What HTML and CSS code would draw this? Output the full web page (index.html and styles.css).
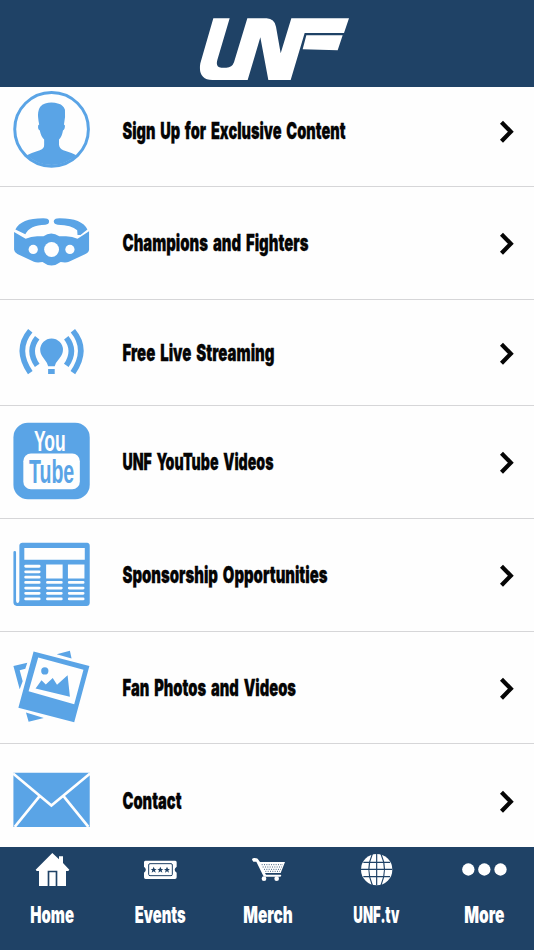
FILE: index.html
```html
<!DOCTYPE html>
<html lang="en">
<head>
<meta charset="utf-8">
<title>UNF</title>
<link rel="stylesheet" href="styles.css">
</head>
<body>
<div class="app">
<header class="header">
  <svg class="logo" viewBox="0 0 570 261" role="img" aria-label="UNF">
    <path d="M100 55H149L112 180Q106 202 124 203H139Q156 203 162 187L202 55H260Q283 56 288 80L302 160L334 55H507L492 99H374L332 240H265L241 112L203 240H97Q53 238 61 190ZM379 106H488L473 151L368 148Z"/>
  </svg>
</header>
<main class="list">
  <a class="row row-first">
    <svg class="icon" viewBox="0 -30 360 336"><circle class="line" cx="154.500" cy="134.500" r="111.500" stroke-width="9"/><path d="M80 213Q90 207 119 198Q133 192 132 181V165Q122 156 119 138Q112 135 114 122L117 120Q112 96 114 83Q116 62 135 56Q155 50 176 57Q190 61 195 75Q197 94 192 120L195 123Q195 135 189 138Q186 157 177 165V181Q178 192 190 198Q220 207 229 213A108 108 0 0 1 80 213Z"/></svg>
    <svg class="label" viewBox="0 0 350 40"><text x="2.500" y="28" textLength="223" lengthAdjust="spacingAndGlyphs">Sign Up for Exclusive Content</text></svg>
    <svg class="arrow" viewBox="0 0 20 30"><path d="M3.500 5.200L12.800 14.700L3.500 24.200"/></svg>
  </a>
  <a class="row">
    <svg class="icon" viewBox="0 -39 360 339"><path d="M45 90Q62 54 137 56Q147 57 147 65Q147 75 136 75Q88 76 75 104ZM263 90Q246 54 171 56Q162 57 161 65Q162 75 173 75Q215 76 232 92L233 106H242ZM41 97L76 118Q94 109 115 110L130 110Q153 94 178 110L194 110Q216 109 233 118L268 95V151Q267 160 254 165L207 187Q199 191 182 188Q154 209 127 188Q110 191 101 187L51 164Q42 159 41 151Z"/><g class="paper"><circle cx="99" cy="150" r="14"/><circle cx="154.500" cy="150" r="22.500"/><circle cx="210" cy="150" r="14"/></g></svg>
    <svg class="label" viewBox="0 0 350 40"><text x="2.500" y="28" textLength="186" lengthAdjust="spacingAndGlyphs">Champions and Fighters</text></svg>
    <svg class="arrow" viewBox="0 0 20 30"><path d="M3.500 5.200L12.800 14.700L3.500 24.200"/></svg>
  </a>
  <a class="row row-short">
    <svg class="icon" viewBox="0 -45 360 318"><path d="M144 156Q142 145 131 132Q120 120 120 106A34.500 34.500 0 0 1 189 106Q189 120 178 132Q166 145 164 156ZM144 164H164V179H144Z"/><path class="line" stroke-width="17" d="M90 48Q42 105 90 175M111 69Q80 108 111 153M219 48Q267 105 219 175M199 69Q230 108 199 153"/></svg>
    <svg class="label" viewBox="0 0 350 40"><text x="2.500" y="28" textLength="152" lengthAdjust="spacingAndGlyphs">Free Live Streaming</text></svg>
    <svg class="arrow" viewBox="0 0 20 30"><path d="M3.500 5.200L12.800 14.700L3.500 24.200"/></svg>
  </a>
  <a class="row">
    <svg class="icon" viewBox="0 -27 360 339"><rect x="39" y="24" width="231" height="231" rx="44"/><rect class="paper" x="69" y="117" width="171" height="108" rx="23"/><text class="tube paper" x="101" y="109" font-size="88" textLength="96" lengthAdjust="spacingAndGlyphs">You</text><text class="tube" x="86" y="206" font-size="98" textLength="137" lengthAdjust="spacingAndGlyphs">Tube</text></svg>
    <svg class="label" viewBox="0 0 350 40"><text x="2.500" y="28" textLength="151" lengthAdjust="spacingAndGlyphs">UNF YouTube Videos</text></svg>
    <svg class="arrow" viewBox="0 0 20 30"><path d="M3.500 5.200L12.800 14.700L3.500 24.200"/></svg>
  </a>
  <a class="row">
    <svg class="icon" viewBox="0 -33 360 339"><path d="M39 68Q39 64 43 64Q47 64 47 68V212Q47 221 52 221Q57 221 57 214V47Q58 39 66 39H262Q270 40 270 48V221Q269 230 261 230H49Q40 230 39 220Z"/><path class="paper" d="M72 55H255V90H72ZM138 105H188V147H138ZM204 105H254V147H204Z"/><path class="rules" d="M76 110H117M76 127H117M76 143H117M76 159H117M76 176H117M76 192H117M76 209H117M142 159H184M142 176H184M142 192H184M142 209H184M208 159H250M208 176H250M208 192H250M208 209H250"/></svg>
    <svg class="label" viewBox="0 0 350 40"><text x="2.500" y="28" textLength="205" lengthAdjust="spacingAndGlyphs">Sponsorship Opportunities</text></svg>
    <svg class="arrow" viewBox="0 0 20 30"><path d="M3.500 5.200L12.800 14.700L3.500 24.200"/></svg>
  </a>
  <a class="row row-mid">
    <svg class="icon" viewBox="0 -24 360 336"><path d="M170 43L210 33L215 56ZM39 79L81 69L75 87L58 92L67 125L58 149ZM77 220L131 236L85 248Z"/><path fill-rule="evenodd" d="M100 35L269 79L223 249L54 205ZM114 53L85 155L223 195L251 90Z"/><circle cx="134" cy="94" r="11"/><path d="M106 147L124 122L137 135L158 115L171 136L203 107L210 172Z"/></svg>
    <svg class="label" viewBox="0 0 350 40"><text x="2.500" y="28" textLength="173.500" lengthAdjust="spacingAndGlyphs">Fan Photos and Videos</text></svg>
    <svg class="arrow" viewBox="0 0 20 30"><path d="M3.500 5.200L12.800 14.700L3.500 24.200"/></svg>
  </a>
  <a class="row row-last">
    <svg class="icon" viewBox="0 -48 360 342"><path d="M39 39H270V203H39Z"/><path class="fold" d="M38 41L154 138L271 41M119 109L43 203M190 109L266 203"/></svg>
    <svg class="label" viewBox="0 0 350 40"><text x="2.500" y="28" textLength="59" lengthAdjust="spacingAndGlyphs">Contact</text></svg>
    <svg class="arrow" viewBox="0 0 20 30"><path d="M3.500 5.200L12.800 14.700L3.500 24.200"/></svg>
  </a>
</main>
<nav class="tabs">
  <a class="tab"><svg viewBox="-6 261 324 309"><path d="M157 279L177 298V289H189V309L208 329L205 333H198V378H172V332H143V378H117V333H110L107 329ZM148 337H167V378H148Z"/><text x="91" y="488" textLength="131" lengthAdjust="spacingAndGlyphs">Home</text></svg></a>
  <a class="tab"><svg viewBox="318 261 324 309"><path d="M436 302H526Q530 302 530 307V320Q518 329 530 338V352Q530 357 525 357H437Q432 357 432 352V338Q443 329 432 320V307Q432 302 436 302Z"/><rect class="ticket-line" x="446" y="311" width="71" height="36" rx="4"/><g class="stars"><path id="star" d="M461 320L464 327H470L465 331L467 338L461 334L455 338L457 331L452 327H458Z"/><use href="#star" x="20"/><use href="#star" x="40"/></g><text x="404" y="488" textLength="153" lengthAdjust="spacingAndGlyphs">Events</text></svg></a>
  <a class="tab"><svg viewBox="642 261 324 309"><path d="M762 294Q754 295 757 301L760 305H769L789 346Q790 350 795 350H838Q844 350 844 347L842 344H798L795 339H842L855 306H780L773 296Q771 294 762 294Z"/><circle cx="792" cy="356" r="7"/><circle cx="830" cy="356" r="7"/><path class="basket" d="M785 314H849M788 321H846M792 328H843M796 334H840"/><text x="730" y="488" textLength="148" lengthAdjust="spacingAndGlyphs">Merch</text></svg></a>
  <a class="tab"><svg viewBox="165 261 324 309"><circle cx="329" cy="329" r="47"/><path class="globe-line" d="M329 282V376M282 328H376M289 307H369M289 350H369M316 282Q295 328 316 376M342 282Q363 328 342 376"/><text x="259" y="488" textLength="138" lengthAdjust="spacingAndGlyphs">UNF.tv</text></svg></a>
  <a class="tab"><svg viewBox="489 261 324 309"><circle cx="604" cy="328.500" r="18.500"/><circle cx="652" cy="328.500" r="18.500"/><circle cx="700.500" cy="328.500" r="18.500"/><text x="592" y="488" textLength="120" lengthAdjust="spacingAndGlyphs">More</text></svg></a>
</nav>
</div>
</body>
</html>
```
FILE: styles.css
```css
* { box-sizing: border-box; }
body { margin: 0; background: #fefefe; font-family: Inter, "Liberation Sans", sans-serif; }
svg { display: block; flex: none; overflow: visible; }
.app { width: 534px; height: 950px; display: flex; flex-direction: column; overflow: hidden; }
.header { height: 87px; flex: none; background: #1f4266; padding-left: 180px; }
.logo { width: 190px; height: 87px; fill: #fff; }
.list { height: 760px; flex: none; overflow: hidden; background: #fefefe; }
.row { height: 113px; display: flex; align-items: center; border-bottom: 1px solid #d6d6d8; }
.row-first { height: 112px; margin-top: -12px; }
.row-short { height: 106px; }
.row-mid { height: 112px; }
.row-last { height: 114px; }
.icon { width: 120px; height: 100%; fill: #5aa4e6; }
.line { fill: none; stroke: #5aa4e6; }
.paper { fill: #fefefe; }
.rules { fill: none; stroke: #fefefe; stroke-width: 8.5; stroke-linecap: round; }
.fold { fill: none; stroke: #fefefe; stroke-width: 8; }
.tube { font-family: "Liberation Sans", sans-serif; font-weight: 700; }
.label { width: 350px; height: 40px; fill: #050505; font-size: 23px; font-weight: 900; word-spacing: 3px; }
.label text { stroke: #050505; stroke-width: 0.3px; }
.arrow { width: 20px; height: 30px; margin: 2px 0 0 28px; fill: none; stroke: #050505; stroke-width: 4.2; stroke-linecap: butt; }
.tabs { height: 103px; flex: none; display: flex; justify-content: center; background: #1f4266; }
.tab { width: 108px; flex: none; }
.tab svg { position: relative; left: 1px; width: 108px; height: 103px; fill: #fff; font-size: 69px; font-weight: 900; }
.tab:first-child path { fill-rule: evenodd; }
.tab .ticket-line { fill: none; stroke: #1f4266; stroke-width: 3; }
.stars { fill: #1f4266; }
.basket { fill: none; stroke: #1f4266; stroke-width: 2.5; stroke-dasharray: 3 4; }
.globe-line { fill: none; stroke: #1f4266; stroke-width: 3.5; }
```
